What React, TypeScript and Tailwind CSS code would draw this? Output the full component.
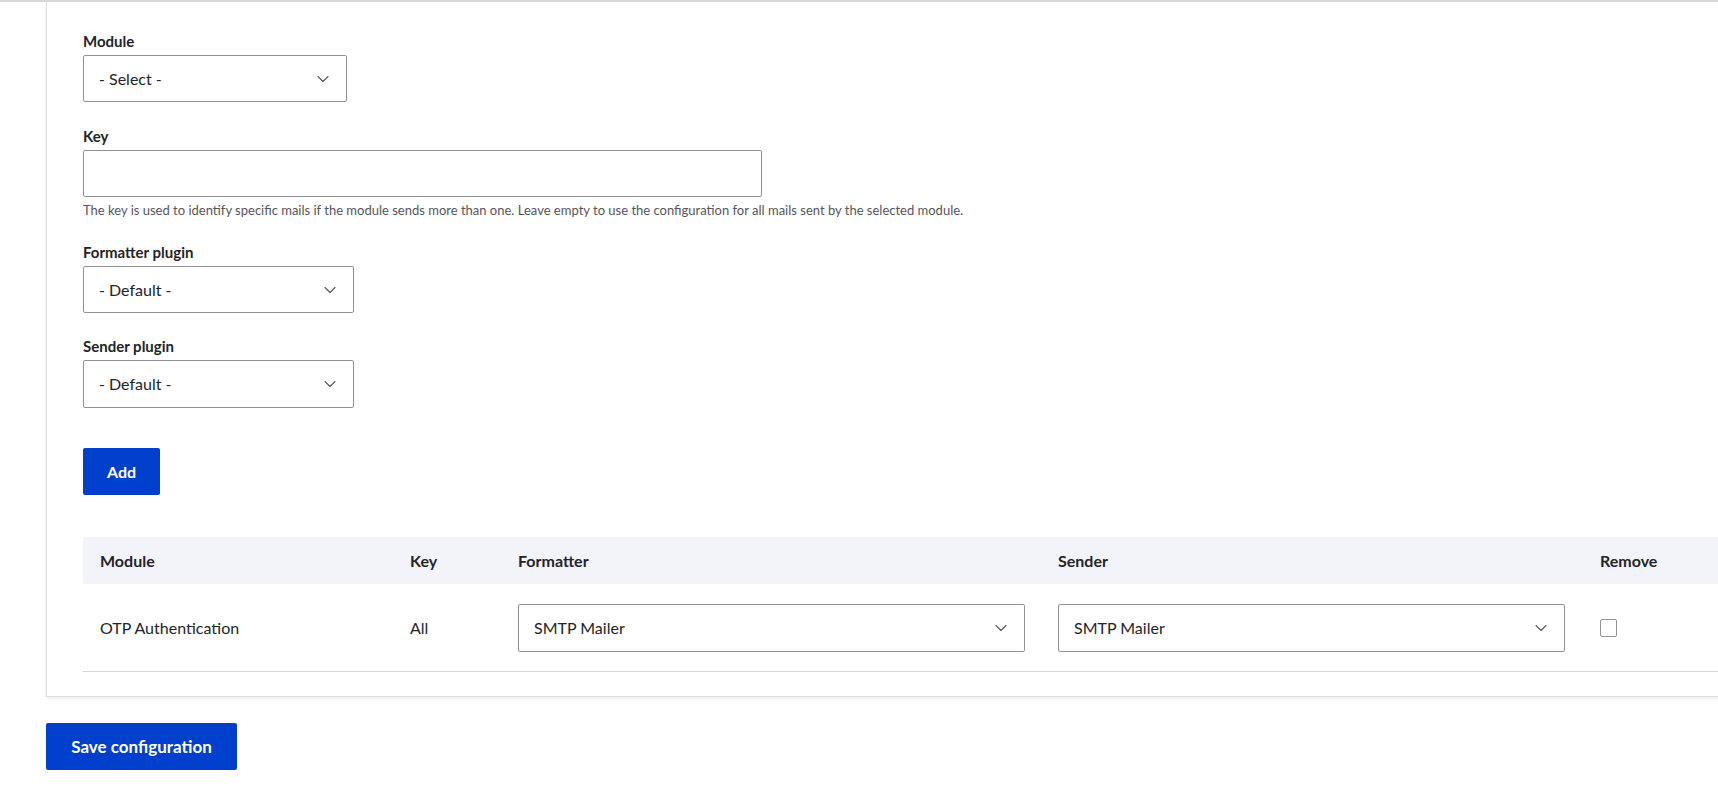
import { ChevronDown } from 'lucide-react';

const font = { fontFamily: 'Lato, "Noto Sans", sans-serif' };

function Select({ value, className }: { value: string; className: string }) {
  return (
    <div
      className={`flex items-center justify-between border border-[#919297] rounded-[2px] bg-white pl-[15px] pr-[13px] text-[16px] text-[#232429] ${className}`}
    >
      <span>{value}</span>
      <ChevronDown className="w-[20px] h-[20px] text-[#545560]" strokeWidth={1.3} />
    </div>
  );
}

function Label({ children }: { children: string }) {
  return (
    <label className="block text-[15px] leading-[18px] font-bold text-[#232429] mb-[5px]">
      {children}
    </label>
  );
}

export default function App() {
  return (
    <div className="min-h-[791px] bg-white overflow-hidden text-[#232429]" style={font}>
      {/* top edge shadow */}
      <div className="h-[2px] bg-[#d8d9dd]" />

      {/* mail configuration card */}
      <div className="ml-[46px] mr-[-60px] border-l border-b border-[#dcdde2] shadow-[0_2px_4px_rgba(0,0,0,0.07)] pl-[36px] pt-[30px] pb-[24px]">
        <div>
          <Label>Module</Label>
          <Select value="- Select -" className="w-[264px] h-[47px]" />
        </div>

        <div className="mt-[25px]">
          <Label>Key</Label>
          <input className="block w-[679px] h-[47px] border border-[#919297] rounded-[2px]" />
          <p className="mt-[5px] text-[13px] leading-[16px] text-[#55565b]">
            The key is used to identify specific mails if the module sends more than one. Leave empty to use the
            configuration for all mails sent by the selected module.
          </p>
        </div>

        <div className="mt-[25px]">
          <Label>Formatter plugin</Label>
          <Select value="- Default -" className="w-[271px] h-[47px]" />
        </div>

        <div className="mt-[24px]">
          <Label>Sender plugin</Label>
          <Select value="- Default -" className="w-[271px] h-[48px]" />
        </div>

        <button className="mt-[40px] h-[47px] px-[24px] bg-[#003ecc] text-white font-bold text-[16px] rounded-[2px]">
          Add
        </button>

        {/* configured mails table */}
        <div className="mt-[42px]">
          <div className="grid grid-cols-[311px_108px_540px_542px_1fr] h-[47px] items-center bg-[#f3f4f9] font-bold text-[16px]">
            <div className="px-[17px]">Module</div>
            <div className="px-[16px]">Key</div>
            <div className="px-[16px]">Formatter</div>
            <div className="px-[16px]">Sender</div>
            <div className="px-[16px]">Remove</div>
          </div>
          <div className="grid grid-cols-[311px_108px_540px_542px_1fr] h-[88px] items-center border-b border-[#d3d4d9] text-[16px]">
            <div className="px-[17px]">OTP Authentication</div>
            <div className="px-[16px]">All</div>
            <div className="px-[16px]">
              <Select value="SMTP Mailer" className="w-[507px] h-[48px]" />
            </div>
            <div className="px-[16px]">
              <Select value="SMTP Mailer" className="w-[507px] h-[48px]" />
            </div>
            <div className="px-[16px]">
              <div className="w-[17px] h-[18px] border border-[#919297] rounded-[2px] bg-white" />
            </div>
          </div>
        </div>
      </div>

      <button className="ml-[46px] mt-[26px] h-[47px] w-[191px] bg-[#003ecc] text-white font-bold text-[17px] rounded-[2px]">
        Save configuration
      </button>
    </div>
  );
}
